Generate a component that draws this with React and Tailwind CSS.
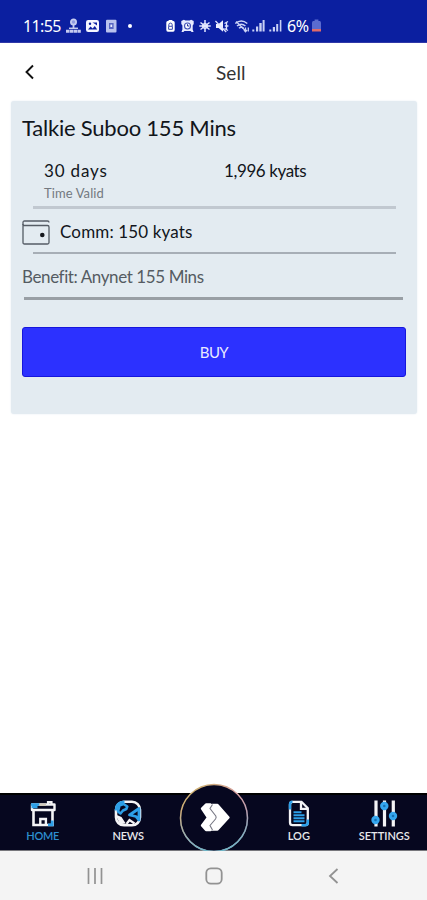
import clsx from 'clsx';

const StatusBar = () => {
  return (
    <header className="flex h-[43px] items-center border-b border-[#3038a8] bg-[#0b1fa0] pt-2.5 pl-[23px] text-white">
      <span className="w-[43px] font-['Noto_Sans'] text-[16px] leading-none tracking-[-0.6px] whitespace-nowrap">11:55</span>

      <svg className="h-4 w-[15px]" viewBox="0 0 15 16" fill="none" stroke="#c5cbf0">
        <circle cx="7.5" cy="4" r="2.6" strokeWidth="1.8" fill="#8f9be0" />
        <path d="M7.5 6.5v4" strokeWidth="1.8" />
        <path d="M3 10.3h9" strokeWidth="1.5" />
        <path d="M0 13.2h15" strokeWidth="3" strokeDasharray="3.4 0.4" />
      </svg>

      <svg className="ml-[5px] h-4 w-[13px]" viewBox="0 0 13 16">
        <rect x="0" y="2" width="13" height="12" rx="2.2" fill="#f4f6ff" />
        <path d="M2 11.6l2.6-3 2 1.8 2.2-2.4 2.4 3.6z" fill="#0b1fa0" />
        <path d="M6.5 4.5H11v3l-2-1.500z" fill="#0b1fa0" />
        <circle cx="4" cy="5.8" r="1.2" fill="#0b1fa0" />
      </svg>

      <svg className="ml-[7px] h-4 w-[11px]" viewBox="0 0 11 16">
        <rect x="0" y="1.8" width="10.5" height="12.6" rx="1" fill="#b9c2ee" />
        <rect x="3" y="5" width="4.6" height="6" fill="#5766c4" />
        <rect x="4.4" y="6.6" width="1.8" height="2.4" fill="#e9ecff" />
      </svg>

      <span className="ml-[11px] size-[4px] rounded-full bg-white" />

      <svg className="ml-[34px] h-4 w-[9px]" viewBox="0 0 9 16">
        <path d="M2.6 2h3.8v1h1q1.3 0 1.3 1.5v7.3q0 2-1.6 2H1.9q-1.6 0-1.6-2V4.5Q.3 3 1.6 3h1z" fill="#fff" />
        <path d="M2.8 8V6.8a1.7 1.7 0 013.4 0V8M2.6 8.3h3.8v3H2.6z" fill="none" stroke="#3947ad" strokeWidth="1" />
      </svg>

      <svg className="ml-[6px] h-4 w-[13px]" viewBox="0 0 13 16">
        <path d="M.3 3l2.6-1.2 1.5.8h4.200l1.500-.8L12.700 3v3l-1 1.500v4l.9 2.500h-2l-1-1H3.400l-1 1H.5l.9-2.500v-4L.3 6z" fill="#e6eaff" />
        <circle cx="6.5" cy="8" r="3" fill="#f8f9ff" stroke="#4252b8" strokeWidth="1.1" />
        <path d="M6.5 6.2V8h1.8" fill="none" stroke="#24369f" strokeWidth="1" />
      </svg>

      <svg className="ml-[5px] h-4 w-[12px]" viewBox="0 0 12 16" fill="none" stroke="#e4e8ff" strokeWidth="1.5">
        <path d="M6 2v12M1.500 4.500l9 7M10.500 4.500l-9 7M.3 8h11.400" />
        <circle cx="6" cy="8" r="2.600" strokeWidth="1" />
      </svg>

      <svg className="ml-[4px] h-4 w-[14px]" viewBox="0 0 14 16">
        <path d="M1 6h2.6L8 2.3v11.4L3.6 10H1z" fill="#eef0ff" />
        <path d="M9.5 5.5l3.5-2M9.8 8h3.6M9.5 10.5l3.5 2M11.5 4.5v7" stroke="#dfe3ff" strokeWidth="1.3" />
        <path d="M.4 3l10.8 11" stroke="#dfe3ff" strokeWidth="1.3" />
      </svg>

      <svg className="ml-[6px] h-4 w-[15px]" viewBox="0 0 15 16" fill="none" stroke="#ccd3f7" strokeWidth="1.5">
        <path d="M.3 5.5q6-5 12 0M2 8q4.2-3.6 8.4 0M4 10.3q2.2-2 4.6 0" />
        <path d="M1.2 3.5l9 9" strokeWidth="1.2" />
        <path d="M10.5 9.5v4M13.3 13.5v-4M9 12l1.5 1.7L12 12" strokeWidth="1.3" />
      </svg>

      <svg className="ml-[2px] h-4 w-[13px]" viewBox="0 0 13 16" fill="#c9d0f5">
        <path d="M.3 11.500h2v2h-2zM4 8.500h2.200v5H4zM7.300 5h2.400v8.500H7.300zM10.600 2h2v11.500h-2z" />
      </svg>
      <svg className="ml-[4px] h-4 w-[13px]" viewBox="0 0 13 16" fill="#c9d0f5">
        <path d="M.3 11.500h2v2h-2zM3.800 9H6v4.500H3.800zM7.200 6h2v7.500h-2zM10.800 2h1.600v11.500h-1.600z" />
      </svg>

      <span className="ml-[5px] w-[25px] font-['Noto_Sans'] text-[16px] leading-none tracking-[-0.4px] whitespace-nowrap">6%</span>
      <svg className="h-4 w-[9px]" viewBox="0 0 9 16">
        <path d="M2.600 1.500h3.800v1.500H8q1 .5 1 2V11H0V5q0-1.500 1-2h1.600z" fill="#5a6bd0" />
        <path d="M0 11h9v2.500H0z" fill="#e06a68" />
      </svg>
    </header>
  );
};

const HomeIcon = () => (
  <svg className="h-7 w-7" viewBox="0 0 28 28" fill="none" stroke="#f4f4f6" strokeWidth="2.6">
    <path d="M4.500 10.500V25h19V10.500" />
    <path d="M3 4.500h22.500v5.500H3z" strokeWidth="2.4" strokeLinejoin="round" />
    <path d="M19 5V2h3.500v3" strokeWidth="2.200" />
    <path d="M11.300 25v-6h5.600v6" strokeWidth="2.400" />
    <path d="M2 4.500h8.500M2.500 7h6" stroke="#2d9fe8" strokeWidth="2.600" />
    <path d="M10.500 4.700h6.500" stroke="#cfc8ba" strokeWidth="2.600" />
    <path d="M23.200 20.500v5.700M19 24.900h5" stroke="#2d9fe8" strokeWidth="2.800" />
  </svg>
);

const NewsIcon = () => (
  <svg className="h-7 w-7" viewBox="0 0 28 28" fill="none" stroke="#f4f4f6" strokeWidth="2.600">
    <rect x="2" y="1.800" width="24" height="23.500" rx="8" />
    <path d="M2 10.500Q2 2 10.500 1.800" stroke="#2d9fe8" strokeWidth="2.800" />
    <path d="M5.500 5.500l4-1.500 3.800 2.500-1 2.500L9 10.500l-2.500 3-2.500-2z" stroke="#2d9fe8" strokeWidth="2.600" strokeLinejoin="round" />
    <path d="M15.500 15l9.500-6.500v11.500l-3-3.500z" stroke="#2d9fe8" strokeWidth="2.800" strokeLinejoin="round" />
    <path d="M3 16l4 1.500 3.500 5.500-4 .5z" fill="#f4f4f6" strokeWidth="1.500" />
    <path d="M12.500 24l3-4 5 3.500" strokeWidth="2.200" />
  </svg>
);

const LogIcon = () => (
  <svg className="h-7 w-7" viewBox="0 0 28 28" fill="none" stroke="#f4f4f6" strokeWidth="2.300">
    <path d="M7.500 1.800H16.500l6.300 6.500v14.200q0 2.700-2.700 2.700H7.700Q5 25.200 5 22.500V4.500Q5 1.800 7.500 1.800z" />
    <path d="M16 2v6.800h6.500" />
    <path d="M5 9.500V4.500Q5 1.800 7.500 1.800M22.800 19.500v3q0 2.700-2.700 2.700H16.500" stroke="#2d9fe8" strokeWidth="2.500" />
    <path d="M8.500 12.300h8M8.500 15.300h11M8.500 18.300h11M8.500 21.300h11" stroke="#2d9fe8" strokeWidth="1.900" />
  </svg>
);

const SettingsIcon = () => (
  <svg className="h-7 w-7" viewBox="0 0 28 28" fill="none" stroke="#f4f4f6" strokeWidth="3.200">
    <path d="M6 .5v26M14.500 .5v26M23.300 .5v26" />
    <g fill="#35a6ee" stroke="none">
      <circle cx="5.500" cy="20" r="4.200" />
      <circle cx="14.300" cy="6" r="4.200" />
      <circle cx="23" cy="16" r="4.200" />
    </g>
    <g fill="#1673b5" stroke="none">
      <circle cx="5.500" cy="20" r="1.300" />
      <circle cx="14.300" cy="6" r="1.300" />
      <circle cx="23" cy="16" r="1.300" />
    </g>
  </svg>
);

const NavItem = ({ icon, label, active, labelClass }) => (
  <button className="flex h-full flex-1 flex-col items-center pt-[5px]">
    {icon}
    <span
      className={clsx(
        'mt-[1px] text-[11px] leading-[14px] font-semibold whitespace-nowrap',
        active ? 'text-[#2d8ed0]' : 'text-[#e8e8ec]',
        labelClass
      )}
    >
      {label}
    </span>
  </button>
);

const BottomNav = () => (
  <nav className="flex h-[58px] border-t-2 border-b border-t-black border-b-[#77777c] bg-[#06071f]">
    <NavItem icon={<HomeIcon />} label="HOME" active labelClass="tracking-[-0.3px]" />
    <NavItem icon={<NewsIcon />} label="NEWS" labelClass="tracking-[-0.2px]" />
    <div className="flex flex-1 justify-center">
      <svg className="-mt-[12px] h-[70px] w-[70px] shrink-0" viewBox="0 0 70 70">
        <defs>
          <linearGradient id="ring" x1="0" y1="0" x2="1" y2="1">
            <stop offset="0" stopColor="#c9b65e" />
            <stop offset="0.500" stopColor="#d8a0a4" />
            <stop offset="1" stopColor="#8f9fc4" />
          </linearGradient>
          <linearGradient id="ringBottom" x1="0" y1="0" x2="0" y2="1">
            <stop offset="0.400" stopColor="#6cb7b5" stopOpacity="0" />
            <stop offset="1" stopColor="#6cb7c8" />
          </linearGradient>
        </defs>
        <circle cx="35" cy="35" r="33.500" fill="#06071f" stroke="url(#ring)" strokeWidth="1.500" />
        <circle cx="35" cy="35" r="33.500" fill="none" stroke="url(#ringBottom)" strokeWidth="1.500" />
        <g fill="#fff" stroke="#fff" strokeWidth="2.400" strokeLinejoin="round">
          <path d="M23 25.500l4-4h4.500l6.500 13L31.500 47H27l-4-4.500 6-8z" />
          <path d="M33 22h5.500L49.500 34.500 38.500 46.500H33l5-12z" />
        </g>
        <path d="M33.500 21.500L31 25.500l5.800 7.500q.8 1.500-.3 3L31 42.500l2.500 4.500" fill="none" stroke="#777884" strokeWidth="1.100" />
      </svg>
    </div>
    <NavItem icon={<LogIcon />} label="LOG" labelClass="tracking-[0.1px]" />
    <NavItem icon={<SettingsIcon />} label="SETTINGS" labelClass="tracking-[0px]" />
  </nav>
);

const SystemNav = () => (
  <div className="flex h-[49px] items-center bg-[#f4f4f4] pl-[87px] text-[#929292]">
    <svg className="h-4 w-4" viewBox="0 0 16 16" fill="none" stroke="currentColor" strokeWidth="1.700">
      <path d="M1.500 0v16M8 0v16M14.500 0v16" />
    </svg>
    <svg className="ml-[102px] h-[18px] w-[18px]" viewBox="0 0 18 18" fill="none" stroke="currentColor" strokeWidth="1.800">
      <rect x="1.300" y="1.300" width="15.400" height="15.400" rx="4.500" />
    </svg>
    <svg className="ml-[105px] h-4 w-[11px]" viewBox="0 0 11 16" fill="none" stroke="currentColor" strokeWidth="1.800">
      <path d="M9.500 1L2 8l7.500 7" />
    </svg>
  </div>
);

const App = () => {
  return (
    <div className="flex h-[900px] w-[427px] flex-col overflow-hidden bg-white font-['Lato',sans-serif] text-[#11151b]">
      <StatusBar />

      <div className="flex h-[58px] items-center pt-[1px] pl-[24px]">
        <svg className="mt-[-1px] h-4 w-[11px]" viewBox="0 0 11 16" fill="none" stroke="#111" strokeWidth="1.900">
          <path d="M9 1.500L2.500 8 9 14.500" />
        </svg>
        <h1 className="ml-[181px] text-[19px] leading-6 tracking-[0.1px] text-[#333]">Sell</h1>
      </div>

      <main className="flex-1 px-[11px]">
        <section className="h-[313px] w-[406px] rounded-[3px] bg-[#e3ebf1] px-[11px] pt-[12px] shadow-[0_0_2px_#e3ebf1]">
          <h2 className="text-[22px] leading-[30px] tracking-[-0.22px] whitespace-nowrap">Talkie Suboo 155 Mins</h2>

          <div className="ml-[11px] flex h-[66px] w-[363px] border-b-[3px] border-[#c1c8d0] pt-[17px] pl-[11px]">
            <div className="w-[180px]">
              <p className="text-[17px] leading-[22px] tracking-[0.85px] whitespace-nowrap">30 days</p>
              <p className="mt-[1px] text-[13px] leading-[20px] tracking-[0.1px] whitespace-nowrap text-[#737980]">Time Valid</p>
            </div>
            <p className="text-[17px] leading-[22px] tracking-[-0.4px] whitespace-nowrap">1,996 kyats</p>
          </div>

          <div className="flex h-[43px] items-center pt-[3px]">
            <svg className="h-[25px] w-[28px]" viewBox="0 0 28 25" fill="none" stroke="#555c65" strokeWidth="1.300">
              <path d="M1 5V2.500Q1 1 2.500 1h23Q27 1 27 2.500" />
              <path d="M1 5.500h24.500q1.500 0 1.500 1.500v15.500q0 1.500-1.500 1.500h-23Q1 24 1 22.500V4" />
              <circle cx="20.300" cy="15" r="2.300" fill="#15181d" stroke="none" />
            </svg>
            <p className="ml-[10px] text-[17px] leading-[22px] tracking-[0.15px] whitespace-nowrap">Comm: 150 kyats</p>
          </div>
          <div className="ml-[11px] h-[2px] w-[363px] bg-[#a7aeb6]" />

          <p className="pt-[12px] text-[17px] leading-[22px] tracking-[-0.4px] whitespace-nowrap text-[#555b62]">Benefit: Anynet 155 Mins</p>
          <div className="mt-[9px] ml-[2px] h-[3px] w-[379px] bg-[#999fa5]" />

          <button className="mt-[27px] flex h-[50px] w-full items-center justify-center rounded-[3px] border border-[#1616dc] bg-[#2c31ff] text-[15px] tracking-[-0.6px] text-[#e9ebff]">
            BUY
          </button>
        </section>
      </main>

      <BottomNav />
      <SystemNav />
    </div>
  );
};

export default App;
